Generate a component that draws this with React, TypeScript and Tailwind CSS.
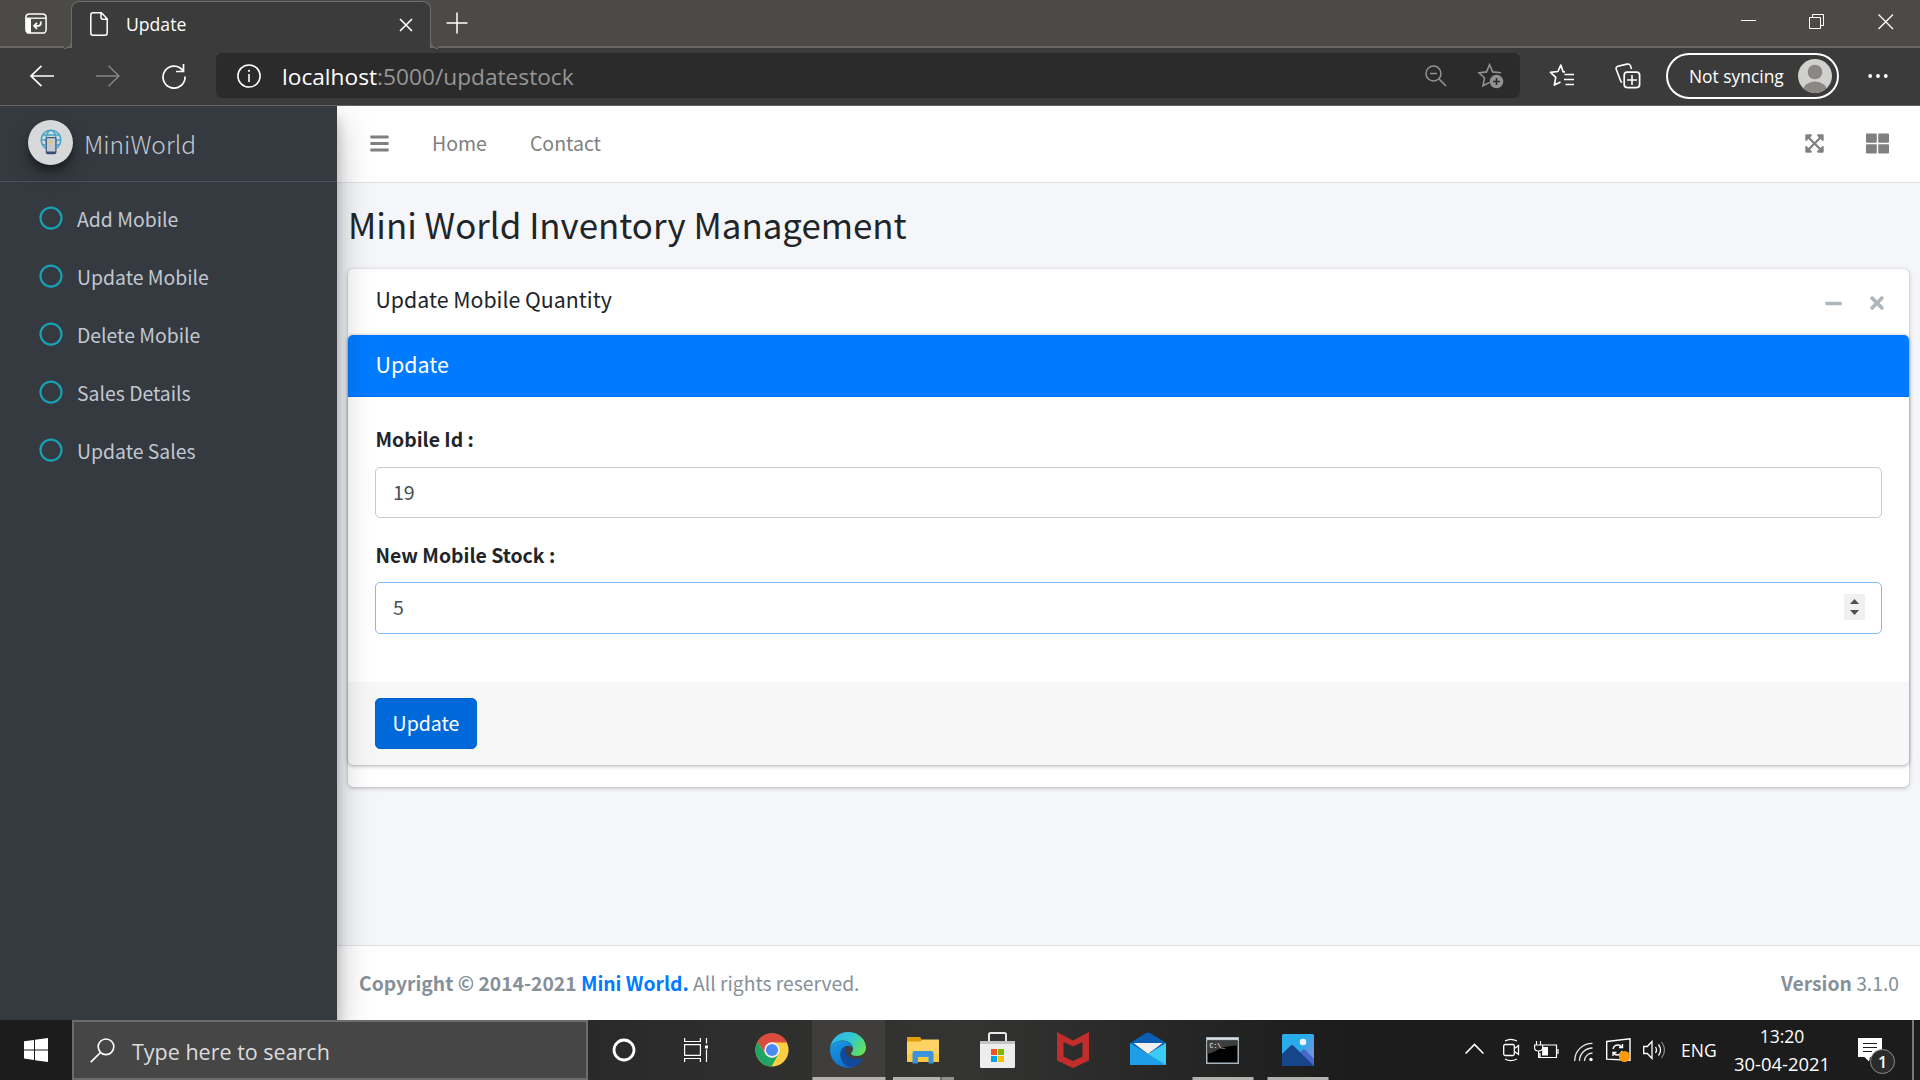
import type { ReactNode } from 'react';
import { FaBars, FaExpandArrowsAlt, FaMinus, FaRegCircle, FaThLarge, FaTimes } from 'react-icons/fa';

function Line({ w, h, className, children }: { w: number; h: number; className?: string; children: ReactNode }) {
  return (
    <svg width={w} height={h} viewBox={`0 0 ${w} ${h}`} fill="none" stroke="currentColor" className={`shrink-0 ${className ?? ''}`}>
      {children}
    </svg>
  );
}

function TitleBar() {
  return (
    <div className="flex h-12 border-b-2 border-[#666562] bg-[#4c4a47] text-white">
      <div className="flex w-[71px] items-start pl-[25px] pt-[13px]">
        <Line w={22} h={21}>
          <rect x="0.9" y="0.9" width="20.2" height="19.2" rx="3.4" strokeWidth="1.5" />
          <path d="M1 5.2h20" strokeWidth="1.3" />
          <path d="M1 5.5h5v14.6H3.6A2.6 2.6 0 0 1 1 17.5z" fill="currentColor" stroke="none" />
          <path d="M15.8 8.6v1.6q0 2.600-2.600 2.600H9.400M12 9.800l-3 3 3 3" strokeWidth="1.700" />
        </Line>
      </div>
      <div className="relative z-10 mt-px flex h-[47px] w-[360px] items-start rounded-t-lg border-x border-t border-[#6e6d6a] bg-[#3b3b3b] pl-[18px] pt-2.5 before:absolute before:-bottom-px before:-left-2 before:size-2 before:rounded-br-lg before:border-b before:border-r before:border-[#6e6d6a] before:bg-[#4c4a47] after:absolute after:-bottom-px after:-right-2 after:size-2 after:rounded-bl-lg after:border-b after:border-l after:border-[#6e6d6a] after:bg-[#4c4a47]">
        <Line w={18} h={24}>
          <path d="M3 .8h8.400l5.800 6V21a2.200 2.200 0 0 1-2.200 2.200H3A2.200 2.200 0 0 1 .8 21V3A2.200 2.200 0 0 1 3 .8zM11 1v4.600a1.600 1.600 0 0 0 1.600 1.600H17" strokeWidth="1.500" />
        </Line>
        <span className="ml-[18px] pt-px text-[17.6px] leading-[22px]">Update</span>
        <Line w={14} h={14} className="ml-auto mr-[17px] mt-[5.5px]">
          <path d="M1 1l12 12M13 1L1 13" strokeWidth="1.6" />
        </Line>
      </div>
      <Line w={22} h={22} className="ml-[15px] mt-3">
        <path d="M11 .5v21M.5 11h21" strokeWidth="1.5" />
      </Line>
      <div className="ml-auto mr-[26px] mt-3.5 flex gap-[53px]">
        <Line w={16} h={16}>
          <path d="M1 6.500h15" />
        </Line>
        <Line w={16} h={16}>
          <path d="M.5 3.500h11v11H.5zM3.500 3.500v-3h11v11h-3" />
        </Line>
        <Line w={16} h={16}>
          <path d="M.5.5l14.500 14.500M15 .5L.5 15" strokeWidth="1.300" />
        </Line>
      </div>
    </div>
  );
}

function AddressBar() {
  return (
    <div className="flex h-[58px] items-center border-b border-[#666562] bg-[#3b3b3b] pb-1 pt-0.5 text-white">
      <Line w={24} h={22} className="ml-[30px]">
        <path d="M24 11H1M11.500 .8L1 11l10.500 10.200" strokeWidth="1.700" />
      </Line>
      <Line w={24} h={22} className="ml-[42px] text-[#868686]">
        <path d="M0 11h23M12.500 .8L23 11 12.500 21.200" strokeWidth="1.500" />
      </Line>
      <Line w={25} h={26} className="ml-[41px]">
        <path d="M22.200 8A11 11 0 1 0 24 13.500M22.500 1v7.500H15" strokeWidth="1.700" />
      </Line>
      <div className="ml-[30px] flex h-[45px] w-[1304px] items-center rounded-md bg-[#2b2b2b]">
        <Line w={24} h={24} className="ml-[21px]">
          <circle cx="12" cy="12" r="11.100" strokeWidth="1.500" />
          <path d="M12 10v8" strokeWidth="1.600" />
          <circle cx="12" cy="6.800" r="1.100" fill="currentColor" stroke="none" />
        </Line>
        <span className="ml-[21px] pt-[3.500px] text-[22.700px] leading-8">
          localhost<span className="text-[#969696]">:5000/updatestock</span>
        </span>
        <Line w={22} h={22} className="ml-auto text-[#929292]">
          <circle cx="8.500" cy="8.500" r="7.500" strokeWidth="1.500" />
          <path d="M5 8.500h7M14 14l7 7" strokeWidth="1.700" />
        </Line>
        <Line w={28} h={26} className="ml-[30px] mr-[15px] text-[#929292]">
          <path d="M11 18l-6.200 3.200 1.400-7.400L1 8.800l7.100-.8L11 1.200 14 8l8 .8" strokeWidth="1.500" transform="translate(1 .5) scale(1.050)" />
          <circle cx="19.500" cy="18.500" r="6.800" fill="currentColor" stroke="none" />
          <path d="M19.500 15v7M16 18.500h7" stroke="#2b2b2b" strokeWidth="1.600" />
        </Line>
      </div>
      <Line w={26} h={25} className="ml-[29px]">
        <path d="M16 8.800h-1.900L11.800 2 8.900 8.500l-7.400.8 5.300 5-1.500 7.800L11.500 19" strokeWidth="1.700" strokeLinejoin="round" />
        <path d="M15.500 11.500H25M15 16.500h10M16.500 21.500H25" strokeWidth="1.700" />
      </Line>
      <Line w={26} h={26} className="ml-10">
        <rect x="9.200" y="9.200" width="15.400" height="15.400" rx="3" strokeWidth="1.700" />
        <path d="M17 12v10M12 17h10M7 19.500l-1-.8L1.300 6.500q-.8-2.300 1.500-3.200L12 1.100q2.400-.6 3.400 1.500L16.500 6" strokeWidth="1.600" />
      </Line>
      <div className="ml-[25px] flex h-[46px] w-[173px] items-center rounded-full border-2 border-white pl-[21px]">
        <span className="whitespace-nowrap text-[17.400px] leading-6">Not syncing</span>
        <svg width="34" height="34" viewBox="0 0 34 34" className="ml-auto mr-[5px] shrink-0">
          <clipPath id="avatar"><circle cx="17" cy="17" r="17" /></clipPath>
          <g clipPath="url(#avatar)">
            <rect width="34" height="34" fill="#d2d0cd" />
            <circle cx="17" cy="13" r="7.300" fill="#8a8785" />
            <ellipse cx="17" cy="32" rx="12" ry="9.500" fill="#8a8785" />
          </g>
        </svg>
      </div>
      <Line w={20} h={6} className="ml-[29px]">
        <g fill="currentColor" stroke="none">
          <circle cx="2.200" cy="3" r="1.900" />
          <circle cx="10" cy="3" r="1.900" />
          <circle cx="17.800" cy="3" r="1.900" />
        </g>
      </Line>
    </div>
  );
}

function Sidebar() {
  const links = ['Add Mobile', 'Update Mobile', 'Delete Mobile', 'Sales Details', 'Update Sales'];
  return (
    <aside className="relative z-10 w-[337px] shrink-0 bg-[#343a40] text-[#c2c7d0] shadow-[0_17px_35px_rgba(0,0,0,0.25),0_12px_12px_rgba(0,0,0,0.22)]">
      <div className="flex h-[76px] items-center border-b border-[#4b545c] pl-7 pb-[3px]">
        <div className="flex size-[45px] items-center justify-center rounded-full bg-[#d6d8da] shadow-[0_10px_20px_rgba(0,0,0,0.25),0_6px_6px_rgba(0,0,0,0.3)]">
          <svg width="22" height="26" viewBox="0 0 22 26" fill="none">
            <g stroke="#46a5c8" strokeWidth="1.500">
              <circle cx="11" cy="11" r="9.800" />
              <ellipse cx="11" cy="11" rx="5" ry="9.800" />
              <path d="M1 11h20M2.500 6h17M2.500 16h17" />
            </g>
            <rect x="6.300" y="8.600" width="9.600" height="16" rx="1.500" fill="#c6cbd3" stroke="#42597e" strokeWidth="1.200" />
            <path d="M6.300 22.500h9.600v1.200q0 1.200-1.200 1.200H7.500q-1.200 0-1.200-1.200z" fill="#364d75" />
            <path d="M8 13l3-2 2 2-3 3z" fill="#dfc66a" />
          </svg>
        </div>
        <span className="ml-[11px] pt-[3px] text-[24.500px] font-light leading-8">MiniWorld</span>
      </div>
      <nav className="flex flex-col pt-[7px]">
        {links.map((l) => (
          <a key={l} className="flex h-[58px] items-center pl-[39px]">
            <FaRegCircle className="size-6 text-[#17a2b8]" />
            <span className="ml-3.5 pt-[2px] text-[19.400px] leading-8">{l}</span>
          </a>
        ))}
      </nav>
    </aside>
  );
}

function Navbar() {
  return (
    <header className="flex h-[77px] items-center border-b border-[#dee2e6] bg-white pb-0.5 pl-8 text-[19.500px] leading-8 text-[#808080]">
      <FaBars className="size-[21px]" />
      <span className="ml-[42px]">Home</span>
      <span className="ml-[43px]">Contact</span>
      <FaExpandArrowsAlt className="ml-auto size-[21px]" />
      <FaThLarge className="ml-[41px] mr-[31.500px] size-[23px]" />
    </header>
  );
}

function UpdateCard() {
  return (
    <section className="ml-[11px] mr-[11px] mt-[13px] h-[518px] rounded-[5px] bg-white shadow-[0_0_1px_rgba(0,0,0,0.16),0_1px_4px_rgba(0,0,0,0.26)]">
      <div className="flex h-[66px] items-center pl-[27.500px] pr-[22px]">
        <h3 className="pb-[7px] text-[21.300px] leading-8">Update Mobile Quantity</h3>
        <FaMinus className="ml-auto mt-0.5 size-[19px] text-[#adb5bd]" />
        <FaTimes className="ml-6 mt-0.5 size-5 text-[#adb5bd]" />
      </div>
      <form className="rounded-[5px] bg-white shadow-[0_0_1px_rgba(0,0,0,0.3),0_1px_4px_rgba(0,0,0,0.3)]" onSubmit={(e) => e.preventDefault()}>
        <div className="flex h-[62px] items-center rounded-t-[5px] border-b border-[#006fe6] bg-[#007bff] pb-[4px] pl-[27.500px]">
          <h3 className="text-[21.400px] leading-8 text-white">Update</h3>
        </div>
        <div className="flex h-[285px] flex-col px-[27px] pt-[25px]">
          <label className="h-[45px] pl-[0.500px] text-[19.400px] font-bold leading-[33px]">Mobile Id :</label>
          <div className="flex h-[51px] items-center rounded-[5px] border border-[#c8ccd3] px-[17px] pb-0.5 text-[19.600px] leading-8 text-[#495057]">19</div>
          <label className="mt-5 h-[44px] pl-[0.500px] text-[19.400px] font-bold leading-[33px]">New Mobile Stock :</label>
          <div className="flex h-[52px] items-center rounded-[5px] border border-[#80bdff] pb-0.5 pl-[17px] pr-4 text-[19.600px] leading-8 text-[#495057]">
            5
            <svg width="21" height="26" viewBox="0 0 21 26" className="ml-auto">
              <rect width="21" height="26" fill="#f0f0f0" />
              <path d="M6 10l4.500-5L15 10zM6 16l4.500 5L15 16z" fill="#505050" />
            </svg>
          </div>
        </div>
        <div className="h-[83px] rounded-b-[5px] bg-black/[0.03] pl-[27px] pt-4">
          <button className="h-[51px] w-[102px] rounded-[5px] border border-[#0062cc] bg-[#0069d9] pb-0.5 text-[19.500px] leading-8 text-white">Update</button>
        </div>
      </form>
    </section>
  );
}

function Cell({ w, bar, active, children }: { w: number; bar?: number; active?: boolean; children: ReactNode }) {
  return (
    <div className={`relative flex h-full shrink-0 items-center justify-center ${active ? 'bg-[#403e3c]' : ''}`} style={{ width: w }}>
      {children}
      {bar && <div className="absolute bottom-0 left-1/2 h-[3px] -translate-x-1/2 bg-[#b3b1ae]" style={{ width: bar }} />}
    </div>
  );
}

function Taskbar() {
  return (
    <footer className="flex h-[60px] bg-linear-to-r from-[#1c1c1c] from-5% via-[#343433] via-50% to-[#1c1c1c] to-70% font-['Open_Sans',sans-serif] text-white">
      <Cell w={72}>
        <svg width="24" height="24" viewBox="0 0 24 24" fill="#fff">
          <path d="M0 3.300l10-1.400v9.500H0zM11 1.700L24 0v11.400H11zM0 12.500h10V22L0 20.600zM11 12.500h13V24l-13-1.800z" />
        </svg>
      </Cell>
      <div className="flex w-[516px] shrink-0 items-center border-2 border-[#6c6c6c] bg-[#464646] pl-4">
        <Line w={25} h={25}>
          <circle cx="16" cy="8.800" r="7.800" strokeWidth="1.600" />
          <path d="M10.500 14.500L.8 24.200" strokeWidth="1.700" />
        </Line>
        <span className="ml-[17px] pt-[3px] text-[21.500px] leading-8 text-[#dcdcdc]">Type here to search</span>
      </div>
      <Cell w={72}>
        <Line w={24} h={24}><circle cx="12" cy="12" r="10" strokeWidth="2.800" /></Line>
      </Cell>
      <Cell w={73}>
        <Line w={25} h={24}>
          <path d="M.6 0v3.500h15.800V0M.6 6.600h15.800v10.800H.6zM.6 24v-3.500h15.800V24M22.500 0v5.500M22.500 11.500V24" strokeWidth="1.200" />
          <path d="M21 7.500h3v3h-3z" fill="currentColor" stroke="none" />
        </Line>
      </Cell>
      <Cell w={79}>
        <svg width="34" height="34" viewBox="0 0 34 34" className="mr-px">
          <circle cx="17" cy="17" r="16.600" fill="#ffcd40" />
          <path d="M2.600 8.700A16.600 16.600 0 0 1 32 9.500H17L10.500 20.800z" fill="#db4c3f" />
          <path d="M2.600 8.700L10.500 20.900 17 24.500 23.500 20.900 16.500 33.600A16.600 16.600 0 0 1 2.600 8.700z" fill="#1fa463" />
          <circle cx="17" cy="17" r="7.700" fill="#f3f3f3" />
          <circle cx="17" cy="17" r="6.100" fill="#4a8af4" />
        </svg>
      </Cell>
      <Cell w={73} bar={73} active>
        <svg width="36" height="36" viewBox="0 0 36 36" className="mr-px">
          <defs>
            <linearGradient id="edgeTop" x1="0" y1=".3" x2="1" y2=".7">
              <stop offset="0" stopColor="#2fb4ec" /><stop offset=".5" stopColor="#32c8cf" /><stop offset="1" stopColor="#66e353" />
            </linearGradient>
            <linearGradient id="edgeLeft" x1="0" y1="0" x2=".6" y2="1">
              <stop offset="0" stopColor="#1b9de2" /><stop offset="1" stopColor="#0a6fd0" />
            </linearGradient>
          </defs>
          <path d="M0 17A18 18 0 0 1 18 0C29 0 36 8 36 15.500 36 21 32 24 27 24c-4 0-6-1.500-6-2.500s2-1.500 2-5C23 12 18 8.500 12.500 8.500 5 8.500.5 13 0 17z" fill="url(#edgeTop)" />
          <path d="M0 17.500C.5 12 6 8.800 12 8.800c6 0 11 3.500 11 7.700-.5-1.500-2.500-2.700-5-2.700-4 0-7.500 4-7.500 9.200 0 7 6 12.300 13 12A18 18 0 0 1 0 17.500z" fill="url(#edgeLeft)" />
          <path d="M10.500 22c0-4 2.500-7.200 6-8-2 2-2 5-.5 7.500 3 5 9.500 7 17.300 5-2.500 5-7 8.300-12 9-6.300-.5-10.800-6.500-10.800-13.500z" fill="#114a9b" />
        </svg>
      </Cell>
      <Cell w={76}>
        <svg width="32" height="27" viewBox="0 0 32 27">
          <path d="M0 0h13l1.500 2v4H0z" fill="#e0a00b" />
          <path d="M0 4.500h13.500L15 2.500h17V25H0z" fill="#fdd264" />
          <path d="M0 17h32v8H0z" fill="#fbc842" />
          <path d="M5.500 26.500V16q0-2 2-2h17q2 0 2 2v10.500h-5V20H11v6.500z" fill="#3a93dc" />
        </svg>
        <div className="absolute bottom-0 left-2 flex h-[3px]">
          <div className="w-[47px] bg-[#b3b1ae]" />
          <div className="w-0.5 bg-[#6b6b6a]" />
          <div className="w-3 bg-[#8f8e8c]" />
        </div>
      </Cell>
      <Cell w={73}>
        <svg width="35" height="36" viewBox="0 0 35 36">
          <path d="M9 10V2.500Q9 1 10.500 1h14Q26 1 26 2.500V10" fill="none" stroke="#e8e8e8" strokeWidth="2" />
          <path d="M0 9h35v25.500q0 1.500-1.500 1.500h-32Q0 36 0 34.500z" fill="#ededed" />
          <path d="M0 9h35v3H0z" fill="#c4c4c4" />
          <path d="M11 17h6v6h-6z" fill="#f25022" /><path d="M18 17h6v6h-6z" fill="#7fba00" />
          <path d="M11 24h6v6h-6z" fill="#00a4ef" /><path d="M18 24h6v6h-6z" fill="#ffb900" />
        </svg>
      </Cell>
      <Cell w={78}>
        <svg width="32" height="36" viewBox="0 0 32 36">
          <path d="M0 0l16 8.500L32 0v28.500L16 36 0 28.500zM6.500 10v14.500L16 29l9.500-4.500V10L16 14.500z" fill="#c12d2a" fillRule="evenodd" />
        </svg>
      </Cell>
      <Cell w={72}>
        <svg width="36" height="34" viewBox="0 0 36 34" className="-mt-0.5">
          <path d="M0 11L16 1q2-1.200 4 0l16 10v8H0z" fill="#0a5fb4" />
          <path d="M36 11v22H0z" fill="#3ccbf4" />
          <path d="M0 11l36 22H0z" fill="#1f9ee8" />
          <path d="M3.500 11h29L18 22z" fill="#f0f0f0" />
        </svg>
      </Cell>
      <Cell w={77} bar={61}>
        <svg width="33" height="27" viewBox="0 0 33 27">
          <rect width="33" height="27" fill="#a9b3bb" />
          <path d="M1 1h31v1.500H1z" fill="#dfe5ea" />
          <path d="M1.500 3.500h30v22h-30z" fill="#000" />
          <path d="M1.500 3.500h30v5q-14 0-23 6-3 2-7 2z" fill="#3d3d3d" />
          <text x="3.500" y="10.500" fontSize="6.500" fill="#fff" fontFamily="Liberation Mono">C:\_</text>
        </svg>
      </Cell>
      <Cell w={74} bar={61}>
        <svg width="32" height="32" viewBox="0 0 32 32">
          <clipPath id="photo"><rect width="32" height="32" rx="1.500" /></clipPath>
          <linearGradient id="sky" x1="0" y1="0" x2="1" y2=".6"><stop offset=".6" stopColor="#2aacea" /><stop offset="1" stopColor="#7a8fe0" /></linearGradient>
          <g clipPath="url(#photo)">
            <rect width="32" height="32" fill="url(#sky)" />
            <path d="M14 22l6.500-6q1.500-1.300 3 0L34 27v8H18z" fill="#4868cc" />
            <path d="M0 20l8.500-8.300q1.500-1.300 3 0L32 32H0z" fill="#17458c" />
            <circle cx="21" cy="8" r="3.300" fill="#eef7fd" />
          </g>
        </svg>
      </Cell>
      <div className="ml-auto flex h-full items-center">
        <Line w={19} h={12} className="-mt-0.5"><path d="M.6 10.500l8.900-9 8.900 9" strokeWidth="1.600" /></Line>
        <Line w={17} h={24} className="ml-[19px]">
          <rect x=".7" y="6.500" width="10.600" height="11" rx="1.500" strokeWidth="1.300" />
          <path d="M11.500 10.500l4-3v9l-4-3M2 3q5.500-3.200 12 0M2 21q5.500 3.200 12 0" strokeWidth="1.300" />
        </Line>
        <Line w={25} h={18} className="ml-[14px]">
          <path d="M9 4h13.500v12.500H6V12M24 8v5M2.500 0v4M6.500 0v4M.6 4h8v3q0 3-4 3t-4-3zM4.600 10v6.500H7" strokeWidth="1.200" />
          <path d="M8.500 6h5.500v8.500H8z" fill="currentColor" stroke="none" />
        </Line>
        <Line w={20} h={20} className="ml-[15px] mt-1">
          <path d="M.7 19A17.500 17.500 0 0 1 18.500 1.300M5.500 19A13 13 0 0 1 18.500 6M10.500 19a8 8 0 0 1 8-8" strokeWidth="1.300" className="opacity-90" />
          <circle cx="17" cy="17.500" r="1.700" fill="currentColor" stroke="none" />
        </Line>
        <Line w={25} h={25} className="ml-3">
          <path d="M.7 3.500L24 .8v21.500L.7 21.200z" strokeWidth="1.400" />
          <path d="M7 11q1-4 5-4 2 0 4 2M16.500 6v3.500H13M16 13q-1 4-5 4-2 0-3.500-2M7 18v-3.500h3.500" strokeWidth="1.400" />
          <circle cx="18.500" cy="18.500" r="5.600" fill="#ff9a06" stroke="none" />
        </Line>
        <Line w={23} h={20} className="ml-3">
          <path d="M.7 6.500h3.600L9 1.500v17l-4.700-5H.7zM12.500 7q2 3 0 6M15.500 4.500q4 5.500 0 11" strokeWidth="1.300" />
          <path d="M18.500 2q6 8 0 16" strokeWidth="1.200" className="opacity-50" />
        </Line>
        <span className="ml-[15.500px] w-9 text-[17.500px] leading-6">ENG</span>
        <div className="ml-3 flex w-[106px] flex-col items-center text-[17.500px] leading-7">
          <span>13:20</span>
          <span className="text-[18.400px]">30-04-2021</span>
        </div>
        <div className="relative ml-[23px] mr-[30px] h-6 w-6">
          <svg width="24" height="24" viewBox="0 0 24 24">
            <path d="M0 0h24v19H12l-1 4.500L6.500 19H0z" fill="#fff" />
            <path d="M5 5.500h14M5 9.500h14M5 13.500h9" stroke="#1c1c1c" strokeWidth="1.200" />
          </svg>
          <div className="absolute left-3 top-[11px] flex size-[25px] items-center justify-center rounded-full border border-[#8a8a8a] bg-[#2b2b2b] text-base font-semibold">1</div>
        </div>
        <div className="mr-1.5 h-full w-0.5 bg-[#777]" />
      </div>
    </footer>
  );
}

export default function App() {
  return (
    <div className="flex h-[1080px] w-[1920px] flex-col overflow-hidden">
      <div className="font-['Open_Sans',sans-serif]">
        <TitleBar />
        <AddressBar />
      </div>
      <div className="flex h-[914px] overflow-hidden bg-[#f4f6f9] font-['Noto_Sans_CJK_SC',sans-serif] text-[#212529]">
        <Sidebar />
        <div className="flex min-w-0 grow flex-col">
          <Navbar />
          <h1 className="ml-[11px] mt-5 h-[53px] text-[34.860px] leading-[42px]">Mini World Inventory Management</h1>
          <UpdateCard />
          <footer className="mt-auto flex h-[75px] items-center justify-between border-t border-[#dee2e6] bg-white pl-[22px] pr-[21px] text-[19.300px] leading-8 text-[#869099]">
            <span>
              <b>Copyright © 2014-2021 <span className="text-[#007bff]">Mini World.</span></b> All rights reserved.
            </span>
            <span><b>Version</b> 3.1.0</span>
          </footer>
        </div>
      </div>
      <Taskbar />
    </div>
  );
}
